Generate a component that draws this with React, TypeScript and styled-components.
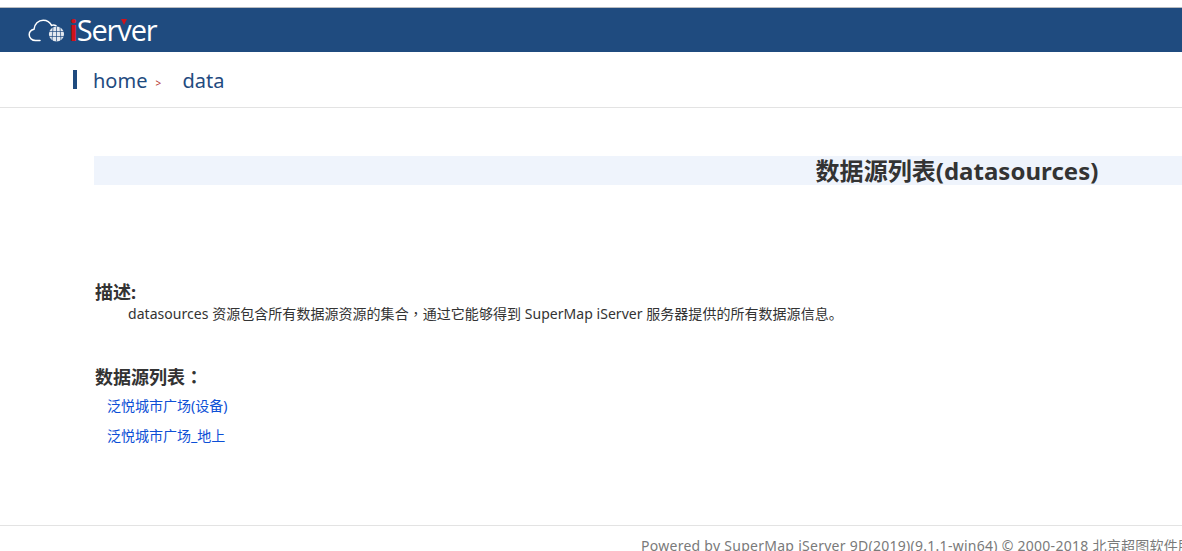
import styled, { createGlobalStyle } from 'styled-components'

const GlobalStyle = createGlobalStyle`
    html, body {
        margin: 0;
        padding: 0;
        background: #fff;
        overflow: hidden;
    }
    body {
        width: 1182px;
        height: 551px;
        font-family: 'Noto Sans', 'Noto Sans CJK SC', sans-serif;
    }
`

function CloudLogo() {
    return <svg width="38" height="26" viewBox="0 0 38 26" fill="none">
        <path d="M12 23.5H7.5C4 23.5 1.2 21 1.2 17.8C1.2 15 3.2 12.8 6 12.2C6.4 7 10.4 3.2 15.2 3.2C19 3.2 22 5.2 23.6 8.4"
            stroke="#fff" strokeWidth="1.5" strokeLinecap="round" />
        <path d="M23.6 8.4C25 7.9 26.6 8 28 8.7" stroke="#fff" strokeWidth="1.5" strokeLinecap="round" />
        <circle cx="28.5" cy="17" r="7.6" fill="#e4e9f0" />
        <path d="M21 14.5H36M21 19.5H36M25 10L24 24M32 10L33 24M28.5 9.5V24.5" stroke="#1f4b7f" strokeWidth="0.7" />
    </svg>
}

export default function App() {
    return <Page>
        <GlobalStyle />
        <Header>
            <CloudLogo />
            <Brand><BrandMark>i</BrandMark>Ser<BrandV>v</BrandV>er</Brand>
        </Header>
        <Breadcrumb>
            <CrumbLink>home</CrumbLink>
            <CrumbArrow>&gt;</CrumbArrow>
            <CrumbLink>data</CrumbLink>
        </Breadcrumb>
        <Content>
            <TitleBand>数据源列表(datasources)</TitleBand>
            <SectionTitle>描述:</SectionTitle>
            <Description>datasources 资源包含所有数据源资源的集合<Punct>，</Punct>通过它能够得到 SuperMap iServer 服务器提供的所有数据源信息。</Description>
            <ListTitle>数据源列表<Punct>：</Punct></ListTitle>
            <SourceList>
                <SourceLink href="#">泛悦城市广场(设备)</SourceLink>
                <SourceLink href="#">泛悦城市广场_地上</SourceLink>
            </SourceList>
        </Content>
        <Footer>Powered by SuperMap iServer 9D(2019)(9.1.1-win64) © 2000-2018 北京超图软件股份有限公司</Footer>
    </Page>
}

const Page = styled.div`
    width: 1182px;
    height: 551px;
    overflow: hidden;
    padding-top: 7px;
    box-sizing: border-box;
`

const Header = styled.header`
    display: flex;
    align-items: center;
    gap: 3px;
    height: 44px;
    padding-left: 28px;
    background: #1f4b7f;
    border-top: 1px solid #b9bcc0;
`

const Brand = styled.div`
    font-family: 'Open Sans', sans-serif;
    font-size: 29px;
    letter-spacing: -1.15px;
    line-height: 44px;
    color: #fff;
`

const BrandMark = styled.span`
    font-weight: 700;
    color: #d0121b;
`

const BrandV = styled.span`
    position: relative;

    &::before {
        content: '';
        position: absolute;
        left: 4px;
        top: 9px;
        border-left: 3px solid transparent;
        border-right: 3px solid transparent;
        border-top: 6px solid #d0121b;
    }
`

const Breadcrumb = styled.nav`
    display: flex;
    align-items: center;
    height: 53px;
    padding: 2px 0 0 73px;
    border-bottom: 1px solid #e3e3e3;
    box-sizing: content-box;

    &::before {
        content: '';
        width: 4px;
        height: 19px;
        margin: -3px 16px 0 0;
        background: #1f4b7f;
    }
`

const CrumbLink = styled.span`
    font-size: 20px;
    color: #1f4b7f;
`

const CrumbArrow = styled.span`
    width: 35px;
    padding: 5px 0 0 8px;
    box-sizing: border-box;
    font-size: 10px;
    color: #b5342f;
`

const Content = styled.main`
    height: 417px;
    padding: 48px 0 0 94px;
    box-sizing: border-box;
`

const TitleBand = styled.h1`
    width: 1726px;
    height: 29px;
    margin: 0 0 95px;
    background: #eff4fc;
    font-size: 24px;
    font-weight: 700;
    line-height: 29px;
    letter-spacing: 0.03px;
    text-align: center;
    color: #333;
`

const SectionTitle = styled.h2`
    margin: 0 0 0 1px;
    font-size: 18px;
    font-weight: 700;
    line-height: 24px;
    color: #333;
`

const Description = styled.p`
    margin: -1px 0 40px 34px;
    font-size: 14px;
    line-height: 20px;
    letter-spacing: 0.04px;
    white-space: nowrap;
    color: #333;
`

const Punct = styled.span`
    font-family: 'Noto Sans CJK TC', sans-serif;
`

const ListTitle = styled(SectionTitle)``

const SourceList = styled.div`
    display: flex;
    flex-direction: column;
    align-items: flex-start;
    gap: 10px;
    margin: 7px 0 0 13px;
`

const SourceLink = styled.a`
    font-size: 14px;
    line-height: 20px;
    text-decoration: none;
    color: #0c4fd6;
`

const Footer = styled.footer`
    height: 26px;
    padding: 10px 0 0 641px;
    box-sizing: border-box;
    border-top: 1px solid #e3e3e3;
    font-size: 14px;
    line-height: 20px;
    letter-spacing: 0.27px;
    white-space: nowrap;
    color: #7a7a7a;
`
